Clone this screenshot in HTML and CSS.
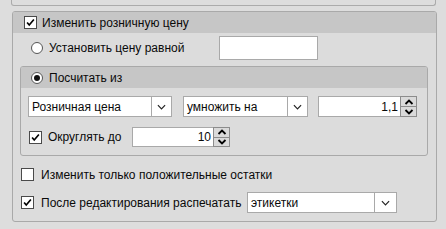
FILE: index.html
```html
<!DOCTYPE html>
<html>
<head>
<meta charset="utf-8">
<link rel="stylesheet" href="styles.css">
</head>
<body>
<div class="top-panel"></div>
<div class="group outer">
  <div class="group-head">
    <span class="cb checked"><svg viewBox="0 0 13 13"><path d="M2.5 6.5 L5 9.5 L10.5 3" fill="none" stroke="#000" stroke-width="2"/></svg></span>
    <span class="label">Изменить розничную цену</span>
  </div>
  <div class="row set-row">
    <span class="radio"></span>
    <span class="label w-set">Установить цену равной</span>
    <span class="textbox w99"></span>
  </div>
  <div class="group inner">
    <div class="group-head inner-head">
      <span class="radio on"></span>
      <span class="label">Посчитать из</span>
    </div>
    <div class="row calc-row">
      <span class="combo w144"><span class="combo-text">Розничная цена</span><span class="combo-btn"><svg viewBox="0 0 10 6"><path d="M1 1 L5 5 L9 1" fill="none" stroke="#222" stroke-width="1.3"/></svg></span></span>
      <span class="combo w125"><span class="combo-text">умножить на</span><span class="combo-btn"><svg viewBox="0 0 10 6"><path d="M1 1 L5 5 L9 1" fill="none" stroke="#222" stroke-width="1.3"/></svg></span></span>
      <span class="num w99"><span class="num-text">1,1</span><span class="spin"><span class="spin-btn"><svg viewBox="0 0 10 6"><path d="M1.5 5 L5 1.5 L8.5 5" fill="none" stroke="#000" stroke-width="1.8"/></svg></span><span class="spin-btn"><svg viewBox="0 0 10 6"><path d="M1.5 1 L5 4.5 L8.5 1" fill="none" stroke="#000" stroke-width="1.8"/></svg></span></span></span>
    </div>
    <div class="row round-row">
      <span class="cb checked"><svg viewBox="0 0 13 13"><path d="M2.5 6.5 L5 9.5 L10.5 3" fill="none" stroke="#000" stroke-width="2"/></svg></span>
      <span class="label w-round">Округлять до</span>
      <span class="num w98 h20"><span class="num-text">10</span><span class="spin"><span class="spin-btn"><svg viewBox="0 0 10 6"><path d="M1.5 5 L5 1.5 L8.5 5" fill="none" stroke="#000" stroke-width="1.8"/></svg></span><span class="spin-btn"><svg viewBox="0 0 10 6"><path d="M1.5 1 L5 4.5 L8.5 1" fill="none" stroke="#000" stroke-width="1.8"/></svg></span></span></span>
    </div>
  </div>
  <div class="row pos-row">
    <span class="cb"></span>
    <span class="label">Изменить только положительные остатки</span>
  </div>
  <div class="row print-row">
    <span class="cb checked"><svg viewBox="0 0 13 13"><path d="M2.5 6.5 L5 9.5 L10.5 3" fill="none" stroke="#000" stroke-width="2"/></svg></span>
    <span class="label w-print">После редактирования распечатать</span>
    <span class="combo w150"><span class="combo-text">этикетки</span><span class="combo-btn wide"><svg viewBox="0 0 10 6"><path d="M1 1 L5 5 L9 1" fill="none" stroke="#222" stroke-width="1.3"/></svg></span></span>
  </div>
</div>
</body>
</html>
```
FILE: styles.css
```css
html, body {
  margin: 0;
  padding: 0;
}
body {
  width: 446px;
  height: 229px;
  overflow: hidden;
  background: #dddddd;
  font-family: "Liberation Sans", Arial, sans-serif;
  font-size: 12px;
  color: #0a0a0a;
}
.top-panel {
  margin-left: 11px;
  width: 423px;
  height: 5px;
  border: 1px solid #ababab;
  border-top: none;
  border-radius: 0 0 3px 3px;
}
.group {
  border: 1px solid #a9a9a9;
  border-radius: 3px;
  background: #dcdcdc;
  box-sizing: border-box;
}
.outer {
  margin-top: 5px;
  margin-left: 12px;
  width: 425px;
  height: 211px;
}
.group-head {
  height: 21px;
  background: #c6c6c6;
  display: flex;
  align-items: center;
  padding-left: 11px;
  border-radius: 2px 2px 0 0;
}
.group-head .label {
  margin-left: 5px;
}
.inner-head {
  padding-left: 10px;
}
.inner-head .label {
  margin-left: 6px;
}
.row {
  display: flex;
  align-items: center;
}
.set-row {
  margin-top: 3px;
  height: 24px;
  padding-left: 18px;
}
.set-row .label {
  margin-left: 6px;
}
.w-set { width: 170px; }
.textbox {
  height: 24px;
  background: #fff;
  border: 1px solid #a9a9a9;
  box-sizing: border-box;
}
.w99 { width: 99px; }
.w98 { width: 98px; }
.w144 { width: 144px; }
.w125 { width: 125px; }
.w150 { width: 150px; }
.inner {
  margin-top: 6px;
  margin-left: 7px;
  width: 408px;
  height: 90px;
}
.calc-row {
  margin-top: 8px;
  padding-left: 7px;
  height: 21px;
}
.calc-row .combo + .combo { margin-left: 11px; }
.calc-row .num { margin-left: 10px; }
.round-row {
  margin-top: 10px;
  height: 20px;
  padding-left: 8px;
}
.round-row .label { margin-left: 6px; }
.w-round { width: 84px; }
.pos-row {
  margin-top: 12px;
  height: 13px;
  padding-left: 8px;
}
.pos-row .label { margin-left: 7px; }
.print-row {
  margin-top: 11px;
  height: 21px;
  padding-left: 8px;
}
.print-row .label { margin-left: 7px; }
.w-print { width: 206px; }
.cb {
  width: 13px;
  height: 13px;
  box-sizing: border-box;
  border: 1px solid #4a4a4a;
  background: #fff;
  flex: none;
  display: flex;
}
.cb svg {
  width: 11px;
  height: 11px;
}
.radio {
  width: 12px;
  height: 12px;
  box-sizing: border-box;
  border: 1px solid #555;
  border-radius: 50%;
  background: #fff;
  flex: none;
  position: relative;
}
.radio.on::after {
  content: "";
  position: absolute;
  left: 2px;
  top: 2px;
  width: 6px;
  height: 6px;
  border-radius: 50%;
  background: #111;
}
.combo, .num {
  height: 21px;
  box-sizing: border-box;
  background: #fff;
  border: 1px solid #a9a9a9;
  display: flex;
  align-items: stretch;
  flex: none;
}
.h20 { height: 20px; }
.combo-text {
  flex: 1;
  display: flex;
  align-items: center;
  padding-left: 3px;
  white-space: nowrap;
}
.combo-btn {
  width: 19px;
  border-left: 1px solid #a9a9a9;
  display: flex;
  align-items: center;
  justify-content: center;
}
.combo-btn.wide { width: 21px; }
.combo-btn svg {
  width: 9px;
  height: 6px;
}
.num-text {
  flex: 1;
  display: flex;
  align-items: center;
  justify-content: flex-end;
  padding-right: 2px;
}
.spin {
  width: 17px;
  display: flex;
  flex-direction: column;
  margin: -1px -1px -1px 0;
}
.spin-btn {
  flex: 1;
  border: 1px solid #8c8c8c;
  background: #dadada;
  display: flex;
  align-items: center;
  justify-content: center;
}
.spin-btn + .spin-btn { margin-top: -1px; }
.spin-btn svg {
  width: 10px;
  height: 6px;
}
```
